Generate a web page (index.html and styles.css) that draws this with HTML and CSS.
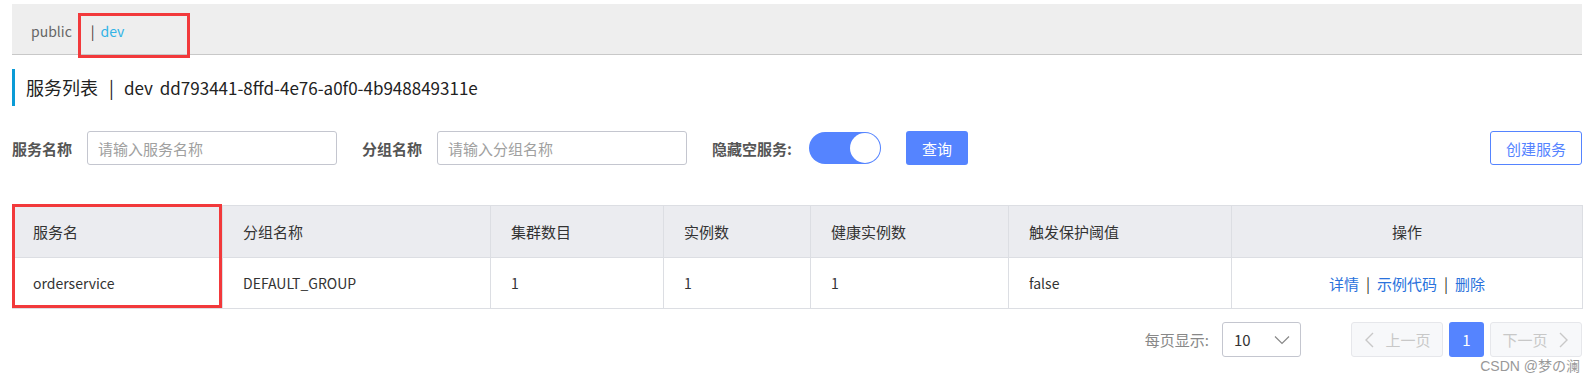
FILE: index.html
```html
<!DOCTYPE html>
<html lang="zh-CN">
<head>
<meta charset="utf-8">
<title>服务列表</title>
<link rel="stylesheet" href="styles.css">
</head>
<body>
<div class="page">
  <div class="nav">
    <span class="ns">public</span><span class="sep">|</span><span class="ns active">dev</span>
  </div>

  <div class="title">
    <span>服务列表</span><span class="tsep">|</span><span class="tns lat">dev</span><span class="lat">dd793441-8ffd-4e76-a0f0-4b948849311e</span>
  </div>

  <div class="filters">
    <label class="lbl">服务名称</label>
    <input class="inp" type="text" placeholder="请输入服务名称">
    <label class="lbl gap">分组名称</label>
    <input class="inp" type="text" placeholder="请输入分组名称">
    <label class="lbl gap sw">隐藏空服务:</label>
    <span class="switch"><span class="knob"></span></span>
    <button class="btn-primary">查询</button>
    <button class="btn-outline">创建服务</button>
  </div>

  <table class="list">
    <colgroup>
      <col class="c1"><col class="c2"><col class="c3"><col class="c4"><col class="c5"><col class="c6"><col class="c7">
    </colgroup>
    <thead>
      <tr>
        <th>服务名</th><th>分组名称</th><th>集群数目</th><th>实例数</th><th>健康实例数</th><th>触发保护阈值</th><th class="center">操作</th>
      </tr>
    </thead>
    <tbody>
      <tr>
        <td>orderservice</td><td>DEFAULT_GROUP</td><td>1</td><td>1</td><td>1</td><td>false</td>
        <td class="center ops"><a>详情</a><span class="osep">|</span><a>示例代码</a><span class="osep">|</span><a>删除</a></td>
      </tr>
    </tbody>
  </table>

  <div class="pager">
    <span class="ps-label">每页显示:</span>
    <span class="select"><span class="sel-val">10</span>
      <svg class="sel-arrow" width="16" height="10" viewBox="0 0 16 10"><path d="M1 1.5 L8 8.5 L15 1.5" fill="none" stroke="#888" stroke-width="1.2"/></svg>
    </span>
    <span class="pbtn prev"><svg width="12" height="16" viewBox="0 0 12 16"><path d="M10 1 L3 8 L10 15" fill="none" stroke="#c8c8c8" stroke-width="1.4"/></svg>上一页</span>
    <span class="pnum">1</span>
    <span class="pbtn next">下一页<svg width="12" height="16" viewBox="0 0 12 16"><path d="M2 1 L9 8 L2 15" fill="none" stroke="#c8c8c8" stroke-width="1.4"/></svg></span>
  </div>

  <div class="mark mark-ns"></div>
  <div class="mark mark-col"></div>
  <div class="watermark">CSDN @梦の澜</div>
</div>
</body>
</html>
```

FILE: styles.css
```css
* { box-sizing: border-box; }

body {
  margin: 0;
  background: #fff;
  color: #333;
  font-family: "Noto Sans CJK SC", "Noto Sans", sans-serif;
}

.page {
  position: relative;
  padding: 4px 12px 0 12px;
  height: 380px;
}

/* namespace bar */
.nav {
  height: 51px;
  background: #eee;
  border-bottom: 1px solid #c8c8c8;
  display: flex;
  align-items: center;
  padding: 4px 0 0 19px;
  font-size: 14px;
}
.ns { color: #666; }
.ns.active { color: #33b3e6; }
.sep { color: #333; margin: 0 6px 0 19px; }

/* title */
.title {
  margin-top: 14px;
  height: 37px;
  line-height: 37px;
  border-left: 3px solid #0a9bd6;
  padding-left: 11px;
  font-size: 18px;
  color: #222;
  display: flex;
}
.lat { font-size: 17px; }
.tsep { margin: 0 10px 0 11px; }
.tns { margin-right: 7px; }

/* filters */
.filters {
  margin-top: 25px;
  height: 34px;
  display: flex;
  align-items: center;
}
.lbl {
  font-size: 15px;
  font-weight: bold;
  color: #555;
  margin-right: 15px;
}
.lbl.gap { margin-left: 25px; }
.lbl.sw { margin-right: 17px; }
.inp {
  width: 250px;
  height: 34px;
  border: 1px solid #c4c6cf;
  border-radius: 3px;
  padding: 0 10px;
  font-family: inherit;
  font-size: 15px;
  color: #333;
  outline: none;
}
.inp::placeholder { color: #a0a0a0; }

.switch {
  width: 72px;
  height: 32px;
  border-radius: 16px;
  background: #5584ff;
  display: flex;
  align-items: center;
  justify-content: flex-end;
  padding: 0 1px;
}
.knob {
  width: 30px;
  height: 30px;
  border-radius: 50%;
  background: #fff;
}

.btn-primary {
  margin-left: 25px;
  width: 62px;
  height: 34px;
  border: none;
  border-radius: 3px;
  background: #5584ff;
  color: #fff;
  font-family: inherit;
  font-size: 15px;
  padding: 0;
}
.btn-outline {
  margin-left: auto;
  width: 92px;
  height: 34px;
  border: 1px solid #5584ff;
  border-radius: 3px;
  background: #fff;
  color: #5584ff;
  font-family: inherit;
  font-size: 15px;
  padding: 0;
}

/* table */
.list {
  margin-top: 40px;
  width: 1570px;
  border-collapse: collapse;
  table-layout: fixed;
  font-size: 15px;
}
.c1 { width: 210px; }
.c2 { width: 268px; }
.c3 { width: 173px; }
.c4 { width: 147px; }
.c5 { width: 198px; }
.c6 { width: 223px; }
.c7 { width: 351px; }

.list th, .list td {
  border: 1px solid #dcdee3;
  text-align: left;
  padding: 0 0 0 20px;
  font-weight: normal;
  color: #333;
}
.list th {
  height: 52px;
  background: #ebecf0;
}
.list td { height: 51px; font-size: 14px; }
.list .center { text-align: center; padding-left: 0; }
.list td.ops { font-size: 15px; }
.ops a { color: #2a72dc; }
.osep { color: #333; margin: 0 7px; }

/* pager */
.pager {
  margin-top: 13px;
  display: flex;
  align-items: center;
  justify-content: flex-end;
  font-size: 15px;
}
.ps-label { color: #888; margin-right: 13px; }
.select {
  width: 79px;
  height: 35px;
  border: 1px solid #c4c6cf;
  border-radius: 3px;
  display: flex;
  align-items: center;
  justify-content: space-between;
  padding: 0 10px 0 11px;
  color: #333;
}
.sel-arrow { display: block; }
.pbtn {
  height: 35px;
  width: 92px;
  border: 1px solid #e6e7eb;
  border-radius: 3px;
  background: #f7f8fa;
  color: #c8c8c8;
  display: flex;
  align-items: center;
  justify-content: center;
  gap: 10px;
}
.pbtn svg { display: block; }
.prev { margin-left: 50px; }
.pnum {
  margin: 0 6px;
  width: 35px;
  height: 35px;
  border-radius: 3px;
  background: #5584ff;
  color: #fff;
  display: flex;
  align-items: center;
  justify-content: center;
}

/* annotation overlays */
.mark {
  position: absolute;
  border: 3px solid #f2393b;
}
.mark-ns { left: 78px; top: 13px; width: 112px; height: 45px; }
.mark-col { left: 12px; top: 204px; width: 210px; height: 104px; }

.watermark {
  position: absolute;
  right: 14px;
  top: 355px;
  font-size: 14px;
  color: #999;
  font-family: "Liberation Sans", "Noto Sans CJK SC", sans-serif;
}
```
